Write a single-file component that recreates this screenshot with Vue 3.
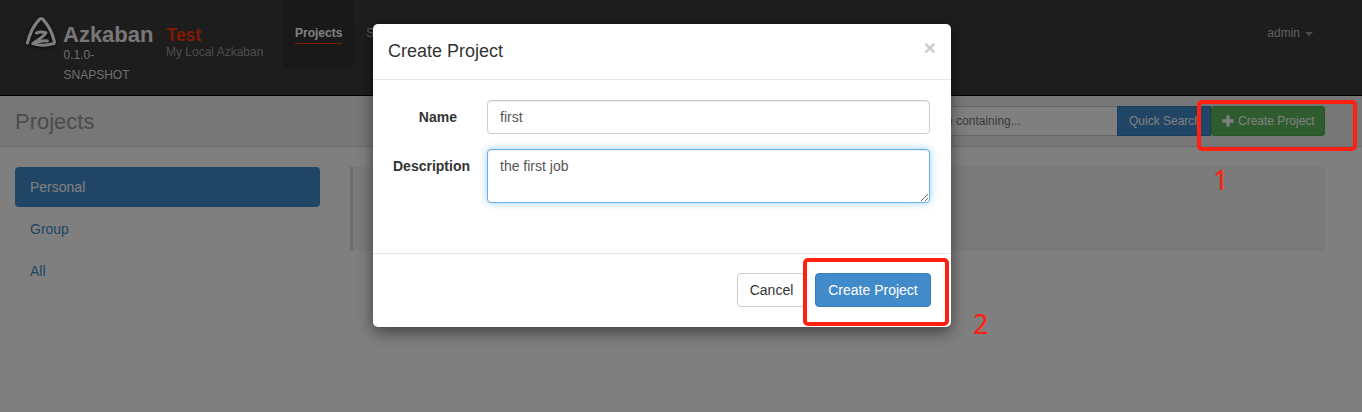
<script setup>
import { ref } from 'vue'

const name = ref('first')
const description = ref('the first job')
const scopes = ['Personal', 'Group', 'All']
const active = ref('Personal')
</script>

<template>
  <div class="page">
    <header class="navbar">
      <div class="brand">
        <svg class="logo" viewBox="0 0 32 32" fill="none" stroke="#fff" stroke-linecap="round" stroke-linejoin="round">
          <path d="M2.5 27C4.2 19.5 8.6 9.6 14.2 3.6Q16.2 1.4 18.2 3.6C23.6 9.8 27.8 18 29.3 25.4Q29.5 27.4 27.8 27.8C21.5 29.6 13.5 29.4 8 27.6" stroke-width="3.1" />
          <path d="M11.4 17C14.2 16 18 15.9 21 16.7C18.6 20.6 13.6 23.8 8 27.4C13.6 25 18.2 24.4 22.4 24.9" stroke-width="3" />
        </svg>
        <div class="product">
          <strong>Azkaban</strong>
          <span>0.1.0-SNAPSHOT</span>
        </div>
      </div>
      <div class="instance">
        <strong>Test</strong>
        <span>My Local Azkaban</span>
      </div>
      <nav class="menu">
        <a class="current"><span>Projects</span></a>
        <a><span>Scheduling</span></a>
      </nav>
      <div class="user">admin <i class="caret"></i></div>
    </header>

    <section class="titlebar">
      <h1>Projects</h1>
      <div class="tools">
        <div class="search">Project name containing...</div>
        <button class="btn-sm blue">Quick Search</button>
        <button class="btn-sm green">
          <svg width="12" height="12" viewBox="0 0 12 12"><path d="M4.3 0.5h3.4v3.8h3.8v3.4H7.7v3.8H4.3V7.7H0.5V4.3h3.8z" fill="#fff" /></svg>
          Create Project
        </button>
      </div>
    </section>

    <main class="content">
      <ul class="pills">
        <li v-for="s in scopes" :key="s" :class="{ on: s === active }" @click="active = s">{{ s }}</li>
      </ul>
      <div class="callout"></div>
    </main>

    <div class="backdrop"></div>

    <div class="modal">
      <div class="modal-head">
        <h4>Create Project</h4>
        <button class="close">×</button>
      </div>
      <div class="modal-body">
        <div class="row">
          <label>Name</label>
          <input v-model="name" class="field" />
        </div>
        <div class="row">
          <label>Description</label>
          <textarea v-model="description" class="field focused"></textarea>
        </div>
      </div>
      <div class="modal-foot">
        <button class="btn">Cancel</button>
        <button class="btn primary">Create Project</button>
      </div>
    </div>

    <div class="mark mark-one"></div>
    <div class="mark mark-two"></div>
    <span class="step step-one">1</span>
    <span class="step step-two">2</span>
  </div>
</template>

<style>
body { margin: 0; overflow: hidden; }
</style>

<style scoped>
* { box-sizing: border-box; }
.page {
  position: relative;
  width: 1362px;
  height: 412px;
  overflow: hidden;
  background: #fff;
  color: #333;
  font: 14px/20px "Liberation Sans", Arial, sans-serif;
}
button { font-family: inherit; margin: 0; }
.navbar {
  display: flex;
  align-items: flex-start;
  height: 96px;
  padding: 0 37px 0 25px;
  background: #3a3a3a;
  border-bottom: 1px solid #000;
  font-size: 12px;
}
.brand { display: flex; width: 141px; }
.logo { width: 32px; height: 32px; margin-top: 15.5px; filter: drop-shadow(0 1px 2px #111); }
.product { display: flex; flex-direction: column; width: 95px; margin: 24px 0 0 6px; color: #ddd; }
.product strong { font-size: 22px; line-height: 21px; color: #eee; }
.product span { width: 80px; padding-left: 0.5px; }
.instance { display: flex; flex-direction: column; width: 117px; margin-top: 25px; color: #999; }
.instance strong { font-size: 17.5px; line-height: 20px; padding-left: 0.5px; color: #ff3601; }
.instance span { line-height: 14px; }
.menu { display: flex; flex: 1; }
.menu a { height: 69px; padding: 23px 12px 0; color: #bbb; }
.menu span { display: block; line-height: 20px; }
.menu .current { background: #333; color: #fff; font-weight: bold; }
.menu .current span { border-bottom: 1px solid #ff3601; }
.user { display: flex; align-items: center; margin: 23px 12px 0 0; color: #bbb; }
.caret { margin: 1px 0 0 5px; border: 4px solid transparent; border-top-color: #999; border-bottom: 0; }
.titlebar {
  display: flex;
  justify-content: space-between;
  height: 51px;
  padding: 10px 37px 0 15px;
  background: #eee;
  border-bottom: 1px solid #ddd;
}
.titlebar h1 { margin: 0; font-size: 22px; font-weight: normal; line-height: 31px; color: #999; }
.tools { display: flex; height: 30px; font-size: 12px; }
.search {
  width: 246px;
  padding: 5px 10px;
  line-height: 18px;
  color: #777;
  background: #fff;
  border: 1px solid #ccc;
  border-right: 0;
  border-radius: 3px 0 0 3px;
}
.btn-sm {
  height: 30px;
  padding: 0 10px;
  font-size: 12px;
  color: #fff;
  border: 1px solid;
  white-space: nowrap;
}
.blue { width: 94px; padding: 0 9px 0 11px; background: #428bca; border-color: #357ebd; }
.green {
  display: flex;
  align-items: center;
  gap: 4px;
  width: 114px;
  padding: 0 9px 0 10px;
  background: #5cb85c;
  border-color: #4cae4c;
  border-radius: 3px;
}
.content { display: flex; gap: 30px; padding: 20px 37px 0 15px; }
.pills {
  display: flex;
  flex-direction: column;
  gap: 2px;
  width: 305px;
  margin: 0;
  padding: 0;
  list-style: none;
}
.pills li { height: 40px; padding: 10px 15px; border-radius: 4px; color: #428bca; }
.pills .on { background: #428bca; color: #fff; }
.callout { flex: 1; height: 84px; background: #f5f5f5; border-left: 3px solid #ddd; }
.backdrop { position: absolute; inset: 0; background: rgba(0, 0, 0, 0.5); }
.modal {
  position: absolute;
  left: 373px;
  top: 24px;
  width: 578px;
  height: 303px;
  display: flex;
  flex-direction: column;
  background: #fff;
  border-radius: 5px;
  box-shadow: 0 5px 15px rgba(0, 0, 0, 0.5);
}
.modal-head {
  display: flex;
  justify-content: space-between;
  height: 56px;
  padding: 15px 15px 0;
  border-bottom: 1px solid #e5e5e5;
}
.modal-head h4 { margin: 0; font-size: 18px; font-weight: normal; line-height: 25px; }
.close {
  height: 17px;
  padding: 0;
  border: 0;
  background: none;
  color: #ccc;
  font-size: 21px;
  font-weight: bold;
  line-height: 17px;
}
.modal-body { display: flex; flex-direction: column; gap: 15px; flex: 1; padding: 20px 21px 0 20px; }
.row { display: flex; gap: 30px; }
.row label { width: 64px; padding-top: 7px; font-weight: bold; text-align: right; }
.field {
  width: 443px;
  height: 34px;
  padding: 6px 12px;
  border: 1px solid #ccc;
  border-radius: 4px;
  outline: 0;
  box-shadow: inset 0 1px 1px rgba(0, 0, 0, 0.075);
  color: #555;
  background: #fff;
  font: inherit;
}
textarea.field { height: 54px; }
.focused {
  border-color: #66afe9;
  box-shadow: inset 0 1px 1px rgba(0, 0, 0, 0.075), 0 0 8px rgba(102, 175, 233, 0.6);
}
.modal-foot {
  display: flex;
  justify-content: flex-end;
  gap: 9px;
  height: 74px;
  padding: 19px 20px 0;
  border-top: 1px solid #e5e5e5;
}
.btn {
  width: 69px;
  height: 34px;
  padding: 0;
  border: 1px solid #ccc;
  border-radius: 4px;
  background: #fff;
  color: #333;
  font-size: 14px;
  white-space: nowrap;
}
.primary { width: 116px; background: #428bca; border-color: #357ebd; color: #fff; }
.mark { position: absolute; border: 4px solid #ff2011; border-radius: 5px; }
.mark-one { left: 1197px; top: 100px; width: 159.5px; height: 51px; }
.mark-two { left: 803px; top: 257.5px; width: 146px; height: 68px; }
.step { position: absolute; font: 27px/30px "Noto Sans", "Open Sans", sans-serif; color: #ff2011; -webkit-text-stroke: 0.2px #ff2011; }
.step-one { left: 1213px; top: 165px; }
.step-two { left: 973px; top: 309px; }
</style>
